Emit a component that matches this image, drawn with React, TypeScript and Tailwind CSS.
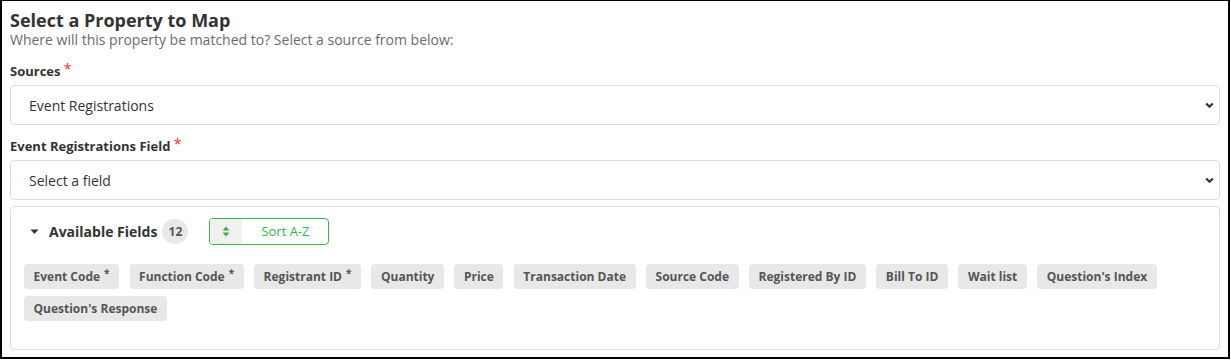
import { useState } from 'react';

const fields = [
  { name: 'Event Code', required: true },
  { name: 'Function Code', required: true },
  { name: 'Registrant ID', required: true },
  { name: 'Quantity' },
  { name: 'Price' },
  { name: 'Transaction Date' },
  { name: 'Source Code' },
  { name: 'Registered By ID' },
  { name: 'Bill To ID' },
  { name: 'Wait list' },
  { name: "Question's Index" },
  { name: "Question's Response" },
];

function Chevron() {
  return (
    <svg width="9" height="7" viewBox="0 0 9 7" className="text-[#333]">
      <path d="M1.2 1.5l3.3 3.3 3.3-3.3" fill="none" stroke="currentColor" strokeWidth="2.2" />
    </svg>
  );
}

function SelectBox({ value }: { value: string }) {
  return (
    <div className="flex items-center justify-between h-10 rounded border border-[#dedede] bg-white pl-[18px] pr-[5px] text-[14px] text-[#333]">
      <span>{value}</span>
      <Chevron />
    </div>
  );
}

function Label({ text }: { text: string }) {
  return (
    <div className="flex items-start h-4 leading-4 text-[13px] font-bold text-[#333] mb-[6px]">
      <span>{text}</span>
      <span className="ml-[3px] -mt-[3px] text-[#e53935] text-[15px] leading-4 font-normal">*</span>
    </div>
  );
}

export default function App() {
  const [open, setOpen] = useState(true);

  return (
    <div
      className="w-[1231px] h-[360px] bg-white"
      style={{ fontFamily: '"Open Sans", "Liberation Sans", sans-serif' }}
    >
      <div className="w-[1230px] h-[359px] border-l-2 border-t border-r-2 border-b-2 border-black pl-2 pr-2 pt-[7px]">
        <h1 className="text-[18px] font-bold leading-6 text-[#333]">Select a Property to Map</h1>
        <p className="text-[14px] leading-4 text-[#6b6b6b]">
          Where will this property be matched to? Select a source from below:
        </p>

        <div className="mt-[15px]">
          <Label text="Sources" />
          <SelectBox value="Event Registrations" />
        </div>

        <div className="mt-[13px]">
          <Label text="Event Registrations Field" />
          <SelectBox value="Select a field" />
        </div>

        <div className="mt-[6px] h-[144px] rounded border border-[#dedede] pl-[13px] pr-[13px] pt-[11px]">
          <div className="flex items-center h-[27px]">
            <button onClick={() => setOpen(!open)} className="flex items-center ml-[6px] mr-[10px]">
              <svg width="9" height="6" viewBox="0 0 9 6">
                <path d="M0.5 0.5h8L4.5 5z" fill="#333" />
              </svg>
            </button>
            <span className="text-[14px] font-bold text-[#333]">Available Fields</span>
            <span className="ml-[5px] flex items-center justify-center w-[26px] h-[25px] rounded-full bg-[#e8e8e8] text-[12px] font-bold text-[#555]">
              12
            </span>
            <button className="ml-[21px] flex h-[27px] w-[120px] overflow-hidden rounded border border-[#2eb84b] text-[13px] text-[#2eb84b]">
              <span className="flex w-[32px] items-center justify-center bg-[#f0f0f0]">
                <svg width="8" height="11" viewBox="0 0 8 11">
                  <path d="M4 0.5L7.5 4.5H0.5z M4 10.5L0.5 6.5h7z" fill="#2eb84b" />
                </svg>
              </span>
              <span className="flex flex-1 items-center justify-center">Sort A-Z</span>
            </button>
          </div>

          {open && (
            <div className="mt-[19px] flex flex-wrap gap-x-[10.5px] gap-y-[7px]">
              {fields.map((f) => (
                <span
                  key={f.name}
                  className="flex h-[25px] items-center rounded bg-[#e8e8e8] px-[9.5px] text-[12px] font-bold text-[#555]"
                >
                  {f.name}
                  {f.required && <span className="ml-[4px] -mt-[7px] text-[10px]">*</span>}
                </span>
              ))}
            </div>
          )}
        </div>
      </div>
    </div>
  );
}
